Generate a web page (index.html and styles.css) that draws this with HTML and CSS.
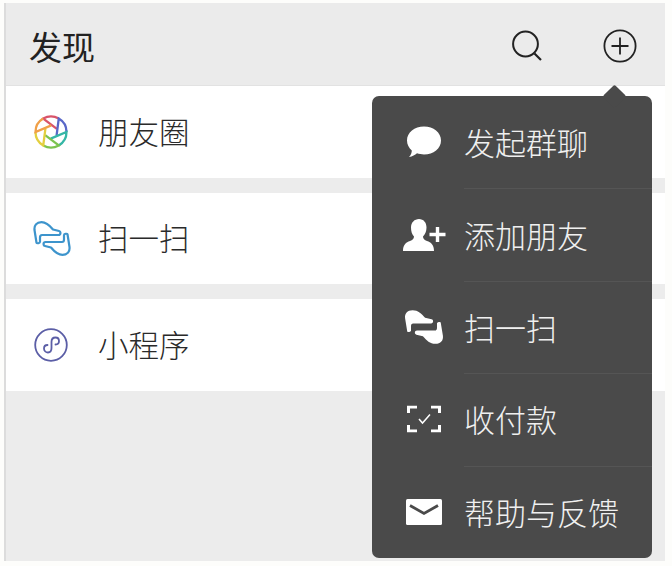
FILE: index.html
```html
<!DOCTYPE html>
<html lang="zh-CN">
<head>
<meta charset="utf-8">
<title>发现</title>
<link rel="stylesheet" href="styles.css">
</head>
<body>
<div class="screen">
  <header class="topbar">
    <h1 class="title">发现</h1>
    <div class="actions">
      <svg class="search" width="32" height="32" viewBox="0 0 32 32"><circle cx="14.5" cy="14" r="12.4" fill="none" stroke="#222" stroke-width="2"/><path d="M23.500 23.500 L30 30" fill="none" stroke="#222" stroke-width="2.200"/></svg>
      <svg class="plus" width="34" height="34" viewBox="0 0 34 34"><circle cx="17" cy="17" r="15.600" fill="none" stroke="#222" stroke-width="1.800"/><path d="M17 8.500V25.500M8.500 17H25.500" fill="none" stroke="#222" stroke-width="1.800"/></svg>
    </div>
  </header>
  <main class="list">
    <div class="row">
      <svg class="row-icon" width="36" height="36" viewBox="0 0 36 36" fill="none" stroke-width="2.300">
        <path d="M31.420 10.250A15.500 15.500 0 0 0 18 2.500L24.600 18.300" stroke="#d9546a" transform="rotate(-30 18 18)"/>
        <path d="M31.420 10.250A15.500 15.500 0 0 0 18 2.500L24.600 18.300" stroke="#5a68c8" transform="rotate(30 18 18)"/>
        <path d="M31.420 10.250A15.500 15.500 0 0 0 18 2.500L24.600 18.300" stroke="#35b6a6" transform="rotate(90 18 18)"/>
        <path d="M31.420 10.250A15.500 15.500 0 0 0 18 2.500L24.600 18.300" stroke="#7cc34f" transform="rotate(150 18 18)"/>
        <path d="M31.420 10.250A15.500 15.500 0 0 0 18 2.500L24.600 18.300" stroke="#e3cf3f" transform="rotate(210 18 18)"/>
        <path d="M31.420 10.250A15.500 15.500 0 0 0 18 2.500L24.600 18.300" stroke="#f0a048" transform="rotate(270 18 18)"/>
      </svg>
      <span class="label">朋友圈</span>
    </div>
    <div class="row">
      <svg class="row-icon" width="38" height="35" viewBox="-.5 -.5 38 37" preserveAspectRatio="none" fill="none" stroke="#3d94cc" stroke-width="2.200" stroke-linejoin="round">
        <path d="M3 22.500L1 9C.5 4 3 .7 8 .7C13 .7 16 4 19.500 8.500L25.500 10C27.500 10.500 27.500 14.300 25 14.300L8.500 14.300C7 14.300 6.500 15.500 6.500 17L6.500 21.500C6.500 23 3.500 23.500 3 22.500Z"/>
        <path d="M3 22.500L1 9C.5 4 3 .7 8 .7C13 .7 16 4 19.500 8.500L25.500 10C27.500 10.500 27.500 14.300 25 14.300L8.500 14.300C7 14.300 6.500 15.500 6.500 17L6.500 21.500C6.500 23 3.500 23.500 3 22.500Z" transform="rotate(180 18.500 18)"/>
      </svg>
      <span class="label">扫一扫</span>
    </div>
    <div class="row">
      <svg class="row-icon" width="36" height="36" viewBox="0 0 36 36" fill="none" stroke="#5b5ea6" stroke-width="1.800" stroke-linecap="round">
        <circle cx="18" cy="18" r="15.800"/>
        <path d="M14.500 18C12.500 18 11 19.500 11 21.500C11 24 13 25.500 15 25.500C17.500 25.500 18.500 23.500 18.500 21V15C18.500 12.500 20 10.500 22.500 10.500C24.500 10.500 26 12 26 14C26 16 24.500 17.500 22.500 17.500"/>
      </svg>
      <span class="label">小程序</span>
    </div>
  </main>
  <nav class="menu">
    <span class="arrow"></span>
    <div class="item">
      <svg class="item-icon" width="36" height="32" viewBox="0 0 36 32" fill="#fff"><path d="M18 .5C27.500 .5 35 6.500 35 14.500C35 22.500 27.500 28.500 18 28.500C15.500 28.500 13 28 11 27.300C9 29 6.500 30.500 3 31C5 29 5.800 26.500 5.800 24.500C3 22 1 18.500 1 14.500C1 6.500 8.500 .5 18 .5Z"/></svg>
      <span class="item-text">发起群聊</span>
    </div>
    <div class="item">
      <svg class="item-icon" width="44" height="34" viewBox="0 0 44 34" fill="#fff"><path d="M17 1C21.500 1 24.500 4.500 24.500 9.500C24.500 13.500 23 16.500 21 18.500C21 21 22.500 22 25 23C29 24.500 32 26.500 32 33H1C1 26.500 4 24.500 8 23C10.500 22 12 21 12 18.500C10 16.500 9 13.500 9 9.500C9 4.500 12.500 1 17 1Z"/><path d="M35.500 9V24M27.500 16.500H43.500" stroke="#fff" stroke-width="3.400" fill="none"/></svg>
      <span class="item-text">添加朋友</span>
    </div>
    <div class="item">
      <svg class="item-icon" width="40" height="35" viewBox="0 0 37 36" preserveAspectRatio="none" fill="#fff"><path d="M3 22.500L1 9C.5 4 3 .7 8 .7C13 .7 16 4 19.500 8.500L25.500 10C27.500 10.500 27.500 14.300 25 14.300L8.500 14.300C7 14.300 6.500 15.500 6.500 17L6.500 21.500C6.500 23 3.500 23.500 3 22.500Z"/><path d="M3 22.500L1 9C.5 4 3 .7 8 .7C13 .7 16 4 19.500 8.500L25.500 10C27.500 10.500 27.500 14.300 25 14.300L8.500 14.300C7 14.300 6.500 15.500 6.500 17L6.500 21.500C6.500 23 3.500 23.500 3 22.500Z" transform="rotate(180 18.500 18)"/></svg>
      <span class="item-text">扫一扫</span>
    </div>
    <div class="item">
      <svg class="item-icon" width="34" height="27" viewBox="0 0 34 27" fill="none" stroke="#fff" stroke-width="3"><path d="M10 1.500H1.500V7.500M24 1.500H32.500V7.500M10 25.500H1.500V19.500M24 25.500H32.500V19.500"/><path d="M12 13.500L15.500 17.500L23 9" stroke-width="1.500"/></svg>
      <span class="item-text">收付款</span>
    </div>
    <div class="item">
      <svg class="item-icon" width="36" height="26" viewBox="0 0 36 26"><rect width="36" height="26" rx="1.500" fill="#fff"/><path d="M4 6.500L18 14.500L32 6.500" fill="none" stroke="#4a4a4a" stroke-width="2.800"/></svg>
      <span class="item-text">帮助与反馈</span>
    </div>
  </nav>
</div>
</body>
</html>
```

FILE: styles.css
```css
html, body {
  margin: 0;
  background: #fdfdfb;
}
body {
  width: 672px;
  height: 566px;
  overflow: hidden;
  font-family: "Noto Sans CJK SC", "Noto Sans", sans-serif;
}
.screen {
  position: relative;
  box-sizing: border-box;
  width: 659px;
  height: 558px;
  margin: 3px 0 0 6px;
  background: #ececec;
  box-shadow: -2px 0 0 #dcdcdc;
}
.topbar {
  display: flex;
  align-items: center;
  justify-content: space-between;
  height: 83px;
  padding: 3px 28px 0 23px;
  background: #ebebeb;
  border-bottom: 1px solid #e2e2e2;
  box-sizing: border-box;
}
.title {
  margin: 0;
  font-size: 33px;
  font-weight: 400;
  color: #222;
}
.actions {
  display: flex;
  align-items: center;
  gap: 60px;
}
.list {
  display: flex;
  flex-direction: column;
  gap: 15px;
}
.row {
  display: flex;
  align-items: center;
  height: 91.5px;
  padding-left: 27px;
  background: #fff;
}
.row-icon {
  flex: none;
  margin-right: 29px;
}
.row:nth-child(2) .row-icon {
  margin-right: 27px;
}
.label {
  font-size: 30.5px;
  font-weight: 300;
  color: #2a2a2a;
  margin-bottom: 2px;
}
.menu {
  position: absolute;
  left: 366px;
  top: 93px;
  width: 280px;
  height: 462px;
  display: flex;
  flex-direction: column;
  border-radius: 7px;
  background: #4a4a4a;
}
.arrow {
  position: absolute;
  right: 29px;
  top: -8px;
  width: 17px;
  height: 17px;
  background: #4a4a4a;
  border-radius: 2px;
  transform: rotate(45deg);
  transform-origin: center;
}
.item {
  position: relative;
  flex: 1;
  display: flex;
  align-items: center;
}
.item + .item::before {
  content: "";
  position: absolute;
  left: 92px;
  right: 0;
  top: 0;
  height: 1px;
  background: #555;
}
.item-icon {
  position: absolute;
  left: 52px;
  top: 50%;
  transform: translate(-50%, -50%);
}
.item-text {
  position: relative;
  margin: 0 0 1px 92px;
  font-size: 31px;
  font-weight: 300;
  color: #f0f0f0;
}
```
